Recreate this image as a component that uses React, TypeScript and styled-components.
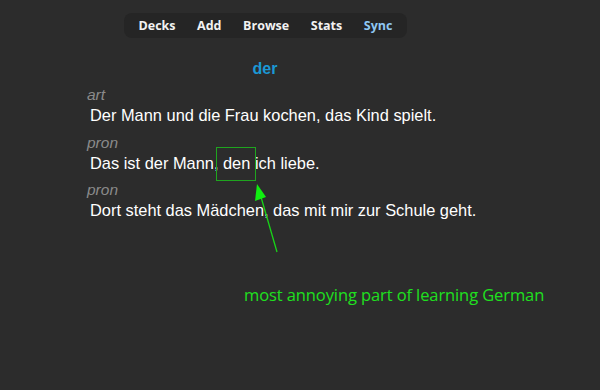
import styled, { createGlobalStyle } from "styled-components";

const Global = createGlobalStyle`
    html, body {
        margin: 0;
        padding: 0;
        background: #2c2c2c;
        height: 100%;
    }
    #root {
        min-height: 390px;
    }
`;

const Page = styled.div`
    position: relative;
    width: 600px;
    height: 390px;
    overflow: hidden;
    background: #2c2c2c;
`;

const Column = styled.div`
    width: 530px;
    display: flex;
    flex-direction: column;
    align-items: center;
`;

const Toolbar = styled.nav`
    margin-top: 13px;
    height: 25px;
    width: 283px;
    box-sizing: border-box;
    padding: 0 14px 0 15px;
    display: flex;
    align-items: center;
    justify-content: space-between;
    background: #252525;
    border-radius: 8px;
`;

const NavItem = styled.span<{ $active?: boolean }>`
    font-family: "Open Sans", "DejaVu Sans", sans-serif;
    font-weight: 700;
    font-size: 12.5px;
    color: ${(p) => (p.$active ? "#8fc7f2" : "#f2f2f2")};
`;

const Card = styled.div`
    width: 354px;
    margin-top: 21px;
    font-family: "Liberation Sans", Arial, sans-serif;
`;

const Word = styled.div`
    text-align: center;
    color: #1b98d5;
    font-weight: 700;
    font-size: 16px;
    line-height: 20px;
    margin-bottom: 7px;
`;

const Entry = styled.div`
    display: flex;
    flex-direction: column;
    margin-bottom: 6.5px;
`;

const Pos = styled.div`
    color: #8a8a8a;
    font-style: italic;
    font-size: 15.5px;
    line-height: 18px;
    margin-left: -1px;
`;

const Sentence = styled.div`
    color: #ffffff;
    font-size: 16.4px;
    line-height: 23px;
    padding-left: 2px;
    white-space: nowrap;
`;

const Boxed = styled.span`
    position: relative;
    &::after {
        content: "";
        position: absolute;
        left: -7px;
        right: -6px;
        top: -7px;
        bottom: -9px;
        border: 1px solid #1fa51f;
    }
`;

const Overlay = styled.svg`
    position: absolute;
    left: 0;
    top: 0;
    pointer-events: none;
`;

const Note = styled.div`
    position: absolute;
    left: 244px;
    top: 283px;
    font-family: "Open Sans", "DejaVu Sans", sans-serif;
    font-size: 16.5px;
    letter-spacing: -0.1px;
    color: #1fe01f;
`;

export default function App() {
    return (
        <>
            <Global />
            <Page>
                <Column>
                    <Toolbar>
                        <NavItem>Decks</NavItem>
                        <NavItem>Add</NavItem>
                        <NavItem>Browse</NavItem>
                        <NavItem>Stats</NavItem>
                        <NavItem $active>Sync</NavItem>
                    </Toolbar>
                    <Card>
                        <Word>der</Word>
                        <Entry>
                            <Pos>art</Pos>
                            <Sentence>Der Mann und die Frau kochen, das Kind spielt.</Sentence>
                        </Entry>
                        <Entry>
                            <Pos>pron</Pos>
                            <Sentence>
                                Das ist der Mann, <Boxed>den</Boxed> ich liebe.
                            </Sentence>
                        </Entry>
                        <Entry>
                            <Pos>pron</Pos>
                            <Sentence>Dort steht das Mädchen, das mit mir zur Schule geht.</Sentence>
                        </Entry>
                    </Card>
                </Column>
                <Overlay width={600} height={390} viewBox="0 0 600 390">
                    <line x1={277} y1={252} x2={261} y2={197} stroke="#18d418" strokeWidth={1.3} />
                    <polygon points="257,184 255,201 266,197" fill="#10ee10" />
                </Overlay>
                <Note>most annoying part of learning German</Note>
            </Page>
        </>
    );
}
